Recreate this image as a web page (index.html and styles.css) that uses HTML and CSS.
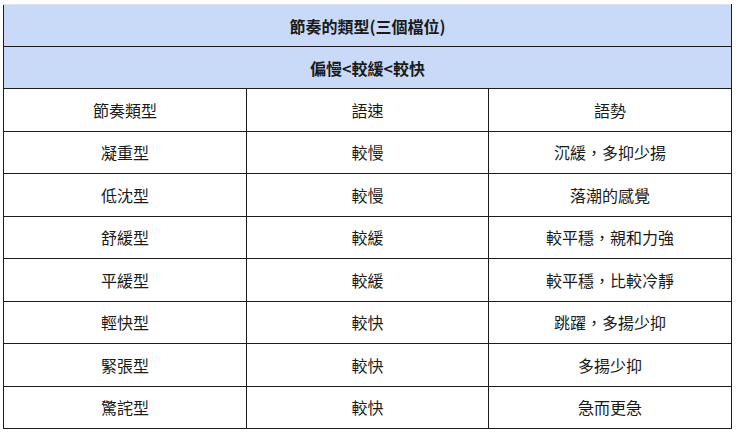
FILE: index.html
```html
<!DOCTYPE html>
<html lang="zh-Hant">
<head>
<meta charset="utf-8">
<link rel="stylesheet" href="styles.css">
</head>
<body>
<table class="rhythm">
  <colgroup><col class="c1"><col class="c2"><col class="c3"></colgroup>
  <thead>
    <tr class="head"><th colspan="3">節奏的類型(三個檔位)</th></tr>
    <tr class="head"><th colspan="3">偏慢&lt;較緩&lt;較快</th></tr>
  </thead>
  <tbody>
    <tr><td>節奏類型</td><td>語速</td><td>語勢</td></tr>
    <tr><td>凝重型</td><td>較慢</td><td>沉緩，多抑少揚</td></tr>
    <tr><td>低沈型</td><td>較慢</td><td>落潮的感覺</td></tr>
    <tr><td>舒緩型</td><td>較緩</td><td>較平穩，親和力強</td></tr>
    <tr><td>平緩型</td><td>較緩</td><td>較平穩，比較冷靜</td></tr>
    <tr><td>輕快型</td><td>較快</td><td>跳躍，多揚少抑</td></tr>
    <tr><td>緊張型</td><td>較快</td><td>多揚少抑</td></tr>
    <tr><td>驚詫型</td><td>較快</td><td>急而更急</td></tr>
  </tbody>
</table>
</body>
</html>
```
FILE: styles.css
```css
html, body {
  margin: 0;
  padding: 0;
  background: #ffffff;
}
body {
  padding: 4px 0 0 3px;
  font-family: "Noto Sans CJK TC", "Noto Sans", sans-serif;
  font-size: 16px;
  color: #1a1a1a;
}
.rhythm {
  width: 728px;
  border-collapse: collapse;
  table-layout: fixed;
}
.c1 { width: 243px; }
.c2 { width: 242px; }
.c3 { width: 243px; }
.rhythm th, .rhythm td {
  border: 1px solid #1c1c1c;
  text-align: center;
  vertical-align: middle;
  padding: 0;
  line-height: 20px;
}
.rhythm .head th {
  background: #c9daf8;
  font-weight: 700;
  height: 41px;
}
.rhythm thead tr:first-child th {
  border-top-color: #dfe5ef;
}
.rhythm tbody td {
  height: 41.5px;
  font-weight: 400;
}
```
